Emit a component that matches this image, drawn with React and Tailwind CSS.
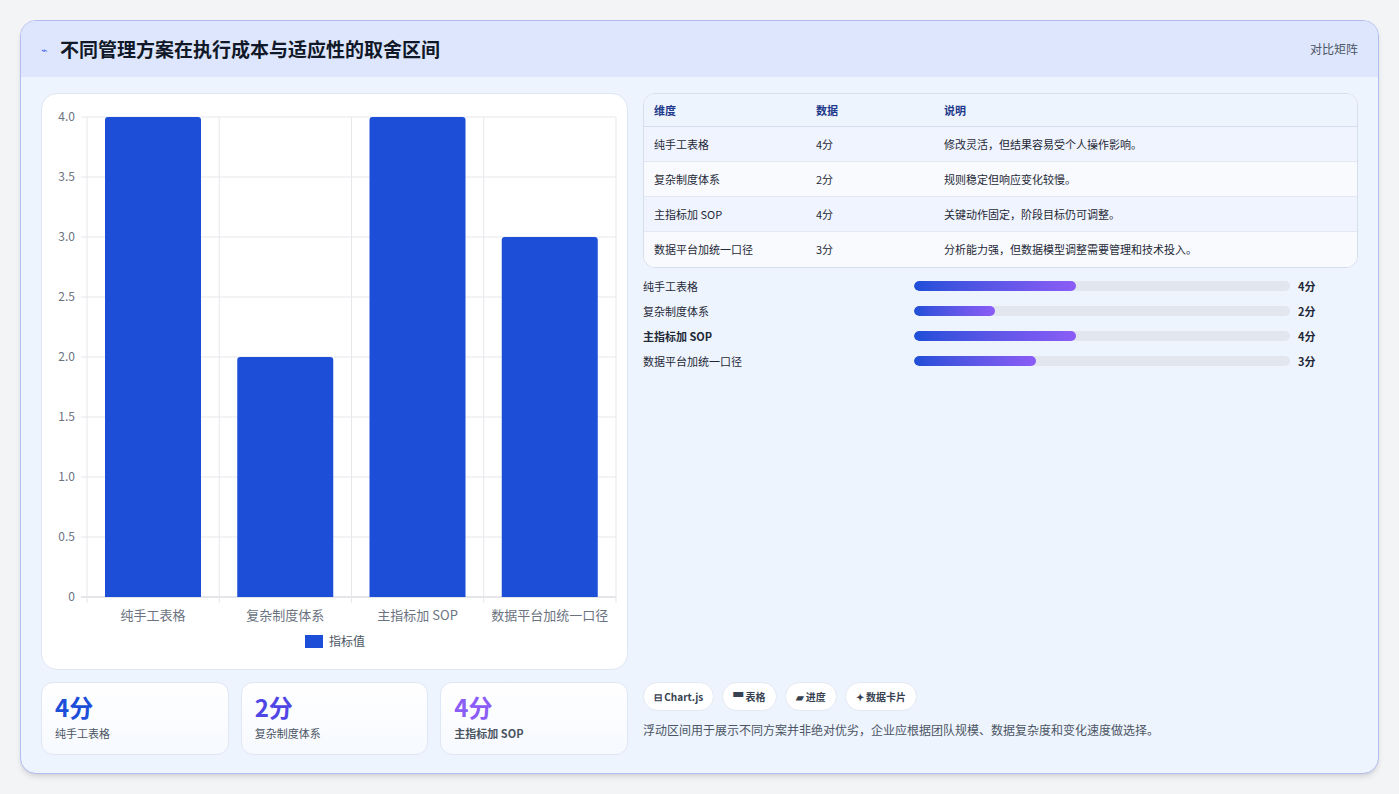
import React from "react";

const rows = [
  ["纯手工表格", 4, "修改灵活，但结果容易受个人操作影响。"],
  ["复杂制度体系", 2, "规则稳定但响应变化较慢。"],
  ["主指标加 SOP", 4, "关键动作固定，阶段目标仍可调整。"],
  ["数据平台加统一口径", 3, "分析能力强，但数据模型调整需要管理和技术投入。"],
];

function Chart() {
  const x0 = 45, x1 = 574, yTop = 23, yBot = 503;
  const cw = (x1 - x0) / 4;
  const ticks = [4, 3.5, 3, 2.5, 2, 1.5, 1, 0.5, 0];
  return (
    <svg width="586" height="576" className="block" style={{ fontFamily: "'Noto Sans CJK SC', sans-serif" }}>
      {ticks.map((t) => {
        const y = yBot - t * 120;
        return (
          <g key={t}>
            <line x1={x0 - 6} x2={x1} y1={y} y2={y} stroke={t === 0 ? "#c8ccd4" : "#e5e7eb"} />
            <text x={x0 - 12} y={y + 4} textAnchor="end" fontSize="12" fill="#6b7280">{t === 0 ? "0" : t.toFixed(1)}</text>
          </g>
        );
      })}
      {[0, 1, 2, 3, 4].map((i) => (
        <line key={i} x1={x0 + i * cw} x2={x0 + i * cw} y1={yTop} y2={yBot + 6} stroke="#e5e7eb" />
      ))}
      {rows.map((r, i) => {
        const h = r[1] * 120;
        const bx = x0 + i * cw + 18;
        return (
          <g key={i}>
            <path d={`M${bx} ${yBot} V${yBot - h + 3} Q${bx} ${yBot - h} ${bx + 3} ${yBot - h} H${bx + 93} Q${bx + 96} ${yBot - h} ${bx + 96} ${yBot - h + 3} V${yBot} Z`} fill="#1d4ed8" />
            <text x={x0 + i * cw + cw / 2} y={526} textAnchor="middle" fontSize="13" fill="#6b7280">{r[0]}</text>
          </g>
        );
      })}
      <rect x="263" y="541" width="18" height="13" fill="#1d4ed8" />
      <text x="287" y="552" fontSize="12" fill="#4b5563">指标值</text>
    </svg>
  );
}

export default function App() {
  return (
    <div className="w-[1399px] h-[794px] bg-[#f3f4f6] pt-5 px-5" style={{ fontFamily: "'Noto Sans CJK SC', 'Noto Sans', sans-serif" }}>
      <div className="h-[754px] rounded-2xl border border-[#b4bdf0] bg-[#eef4fe] overflow-hidden shadow-md flex flex-col">
        <div className="h-[56px] shrink-0 bg-[#dde6fd] flex items-center justify-between px-5">
          <div className="flex items-center gap-3">
            <span className="text-[11px] text-[#4f6ef0]">⌁</span>
            <span className="text-[19px] font-bold text-[#111827]">不同管理方案在执行成本与适应性的取舍区间</span>
          </div>
          <span className="text-[12px] text-[#4b5563]">对比矩阵</span>
        </div>
        <div className="flex gap-[15px] px-5 pt-[16px]">
          <div className="w-[587px] flex flex-col gap-3">
            <div className="h-[577px] bg-white rounded-2xl border border-[#dfe5f3]">
              <Chart />
            </div>
            <div className="grid grid-cols-3 gap-3">
              {[["4分", "纯手工表格", "text-[#1d4ed8]"], ["2分", "复杂制度体系", "text-[#4f46e5]"], ["4分", "主指标加 SOP", "text-[#8b5cf6]"]].map(([v, l, c], i) => (
                <div key={i} className="h-[73px] rounded-xl border border-[#dfe6f5] bg-gradient-to-b from-white to-[#f6f9fe] px-[13px] pt-[8px]">
                  <div className={`text-[24px] font-bold leading-[32px] ${c}`}>{v}</div>
                  <div className={`text-[11px] text-[#4b5563] mt-[2px] ${i === 2 ? "font-semibold" : ""}`}>{l}</div>
                </div>
              ))}
            </div>
          </div>
          <div className="flex-1 flex flex-col">
            <div className="rounded-xl border border-[#d6ddec] overflow-hidden bg-white">
              <div className="h-[33px] bg-[#eef4fe] border-b border-[#d6ddec] flex items-center text-[11px] font-semibold text-[#1e3a8a]">
                <div className="w-[172px] pl-[10px]">维度</div><div className="w-[128px]">数据</div><div>说明</div>
              </div>
              {rows.map((r, i) => (
                <div key={i} className={`h-[35px] flex items-center text-[11px] text-[#1f2937] ${i < 3 ? "border-b border-[#e3e8f2]" : ""} ${i % 2 === 0 ? "bg-[#f0f4fe]" : "bg-[#f8fafd]"}`}>
                  <div className="w-[172px] pl-[10px]">{r[0]}</div><div className="w-[128px]">{r[1]}分</div><div>{r[2]}</div>
                </div>
              ))}
            </div>
            <div className="flex flex-col gap-[13px] mt-[12px]">
              {rows.map((r, i) => (
                <div key={i} className="h-[12px] flex items-center text-[11px] text-[#1f2937]">
                  <div className={`w-[271px] ${i === 2 ? "font-semibold" : ""}`}>{r[0]}</div>
                  <div className="w-[376px] h-[10px] rounded-full bg-[#e2e6ee] overflow-hidden">
                    <div className="h-full rounded-full bg-gradient-to-r from-[#1d4ed8] to-[#8b5cf6]" style={{ width: `${r[1] * 10.8}%` }} />
                  </div>
                  <div className="ml-[8px] font-bold">{r[1]}分</div>
                </div>
              ))}
            </div>
            <div className="mt-auto flex gap-2 text-[10px] font-semibold text-[#374151]">
              {["⊟ Chart.js", "▀ 表格", "▰ 进度", "✦ 数据卡片"].map((t) => (
                <span key={t} className="h-[29px] px-[10px] flex items-center rounded-full bg-white border border-[#e3e8f2]">{t}</span>
              ))}
            </div>
            <div className="mt-[10px] mb-[16px] text-[12px] text-[#4b5563]">浮动区间用于展示不同方案并非绝对优劣，企业应根据团队规模、数据复杂度和变化速度做选择。</div>
          </div>
        </div>
      </div>
    </div>
  );
}
